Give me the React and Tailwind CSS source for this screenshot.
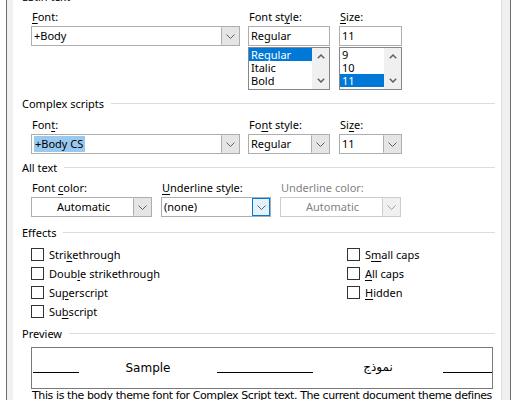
import React from 'react';

const ui = "font-['Noto_Sans',sans-serif] text-[11px] leading-[16px] text-black";

function Chevron({ color = '#606060' }) {
  return (
    <svg width="9" height="5" viewBox="0 0 9 5">
      <polyline points="0.5,0.5 4.5,4.5 8.5,0.5" fill="none" stroke={color} strokeWidth="1" />
    </svg>
  );
}

function ScrollArrow({ up }) {
  return (
    <svg width="8" height="5" viewBox="0 0 8 5">
      <polyline
        points={up ? '0.8,4.2 4,1 7.2,4.2' : '0.8,0.8 4,4 7.2,0.8'}
        fill="none"
        stroke="#606060"
        strokeWidth="1.5"
      />
    </svg>
  );
}

function Header({ children, className = '' }) {
  return (
    <div className={'flex h-[16px] pl-[9px] pr-[6px] ' + className}>
      <span className="whitespace-nowrap">{children}</span>
      <div className="ml-[7px] mt-[7px] h-px flex-1 bg-[#dcdcdc]" />
    </div>
  );
}

function Label({ children, disabled }) {
  return <div className={'h-[16px] pl-[1px] whitespace-nowrap ' + (disabled ? 'text-[#838383]' : '')}>{children}</div>;
}

function U({ children }) {
  return <span className="underline underline-offset-[2px]">{children}</span>;
}

function Combo({ text, center, selected, focused, disabled, button = true }) {
  return (
    <div className={'flex h-[20px] border bg-white ' + (disabled ? 'border-[#cccccc]' : 'border-[#adadad]')}>
      <div className={'flex flex-1 items-center pl-[2px] ' + (center ? 'justify-center' : '')}>
        {selected ? (
          <span className="h-[16px] bg-[#99c9ef] pl-[1px] pr-[2px] leading-[16px]">{text}</span>
        ) : (
          <span className={disabled ? 'text-[#838383]' : ''}>{text}</span>
        )}
      </div>
      {button && (
        <div
          className={
            'flex w-[18px] items-center justify-center border ' +
            (focused
              ? 'border-[#0078d7] bg-[#e5f1fb]'
              : disabled
              ? 'border-transparent border-l-[#cccccc] bg-[#f0f0f0]'
              : 'border-transparent border-l-[#adadad] bg-[#e5e5e5]')
          }
        >
          <Chevron color={disabled ? '#a0a0a0' : '#606060'} />
        </div>
      )}
    </div>
  );
}

function ListBox({ items, selected }) {
  return (
    <div className="flex h-[43px] border border-[#828790] bg-white">
      <div className="flex flex-1 flex-col">
        {items.map((it) => (
          <div
            key={it}
            className={'h-[13px] overflow-hidden pl-[2px] leading-[13px] ' + (it === selected ? 'bg-[#0078d7] text-white' : '')}
          >
            {it}
          </div>
        ))}
      </div>
      <div className="flex w-[17px] flex-col bg-[#f0f0f0]">
        <div className="flex h-[17px] items-center justify-center">
          <ScrollArrow up />
        </div>
        <div className="flex-1" />
        <div className="flex h-[17px] items-center justify-center">
          <ScrollArrow />
        </div>
      </div>
    </div>
  );
}

function Check({ children }) {
  return (
    <div className="flex h-[19px] items-center">
      <div className="h-[13px] w-[13px] border border-[#333333] bg-white" />
      <span className="ml-[5px] whitespace-nowrap">{children}</span>
    </div>
  );
}

export default function App() {
  return (
    <div className={'flex h-[400px] w-[518px] overflow-hidden bg-white ' + ui}>
      <div className="w-[6px]" />
      <div className="flex w-[505px] border-x border-[#6f6f6f] bg-[#f0f0f0] pl-[6px] pr-[8px]">
        <div className="flex w-[489px] flex-col border-r border-[#dcdcdc] bg-white">
          <Header className="mt-[-11px]">Latin text</Header>

          <div className="mt-[4px] flex pl-[18px]">
            <div className="w-[209px]">
              <Label><U>F</U>ont:</Label>
              <div className="mt-[1px]">
                <Combo text="+Body" />
              </div>
            </div>
            <div className="ml-[8px] w-[82px]">
              <Label>Font st<U>y</U>le:</Label>
              <div className="mt-[1px]">
                <Combo text="Regular" button={false} />
              </div>
              <div className="mt-[1px]">
                <ListBox items={['Regular', 'Italic', 'Bold']} selected="Regular" />
              </div>
            </div>
            <div className="ml-[9px] w-[63px]">
              <Label><U>S</U>ize:</Label>
              <div className="mt-[1px]">
                <Combo text="11" button={false} />
              </div>
              <div className="mt-[1px]">
                <ListBox items={['9', '10', '11']} selected="11" />
              </div>
            </div>
          </div>

          <Header className="mt-[6px]">Complex scripts</Header>
          <div className="mt-[5px] flex pl-[18px]">
            <div className="w-[209px]">
              <Label>Fon<U>t</U>:</Label>
              <div className="mt-[1px]">
                <Combo text="+Body CS" selected />
              </div>
            </div>
            <div className="ml-[8px] w-[82px]">
              <Label>Fo<U>n</U>t style:</Label>
              <div className="mt-[1px]">
                <Combo text="Regular" />
              </div>
            </div>
            <div className="ml-[9px] w-[63px]">
              <Label>Si<U>z</U>e:</Label>
              <div className="mt-[1px]">
                <Combo text="11" />
              </div>
            </div>
          </div>

          <Header className="mt-[6px]">All text</Header>
          <div className="mt-[4px] flex pl-[18px]">
            <div className="w-[121px]">
              <Label>Font <U>c</U>olor:</Label>
              <div className="mt-[1px]">
                <Combo text="Automatic" center />
              </div>
            </div>
            <div className="ml-[9px] w-[110px]">
              <Label><U>U</U>nderline style:</Label>
              <div className="mt-[1px]">
                <Combo text="(none)" focused />
              </div>
            </div>
            <div className="ml-[9px] w-[121px]">
              <Label disabled>Underline color:</Label>
              <div className="mt-[1px]">
                <Combo text="Automatic" center disabled />
              </div>
            </div>
          </div>

          <Header className="mt-[8px]">Effects</Header>
          <div className="mt-[4px] flex pl-[18px]">
            <div className="w-[316px]">
              <Check>Stri<U>k</U>ethrough</Check>
              <Check>Doub<U>l</U>e strikethrough</Check>
              <Check>Su<U>p</U>erscript</Check>
              <Check>Su<U>b</U>script</Check>
            </div>
            <div>
              <Check>S<U>m</U>all caps</Check>
              <Check><U>A</U>ll caps</Check>
              <Check><U>H</U>idden</Check>
            </div>
          </div>

          <Header className="mt-[5px]">Preview</Header>
          <div className="mt-[5px] pl-[18px]">
            <div className="flex h-[42px] w-[462px] border border-[#7a7a7a] font-['DejaVu_Sans',sans-serif]">
              <div className="ml-[1px] mt-[24px] h-px w-[46px] bg-black" />
              <div className="mt-[13px] w-[138px] text-center text-[12px] leading-[14px]">Sample</div>
              <div className="mt-[24px] h-px w-[96px] bg-black" />
              <div className="mt-[12px] w-[130px] text-center text-[12px] leading-[14px]" dir="rtl">نموذج</div>
              <div className="mt-[24px] h-px w-[49px] bg-black" />
            </div>
            <div className="mt-[-1px] whitespace-nowrap pl-[1px] font-['DejaVu_Sans',sans-serif] text-[11px] tracking-[-0.4px]">
              This is the body theme font for Complex Script text. The current document theme defines
            </div>
          </div>
        </div>
      </div>
    </div>
  );
}
